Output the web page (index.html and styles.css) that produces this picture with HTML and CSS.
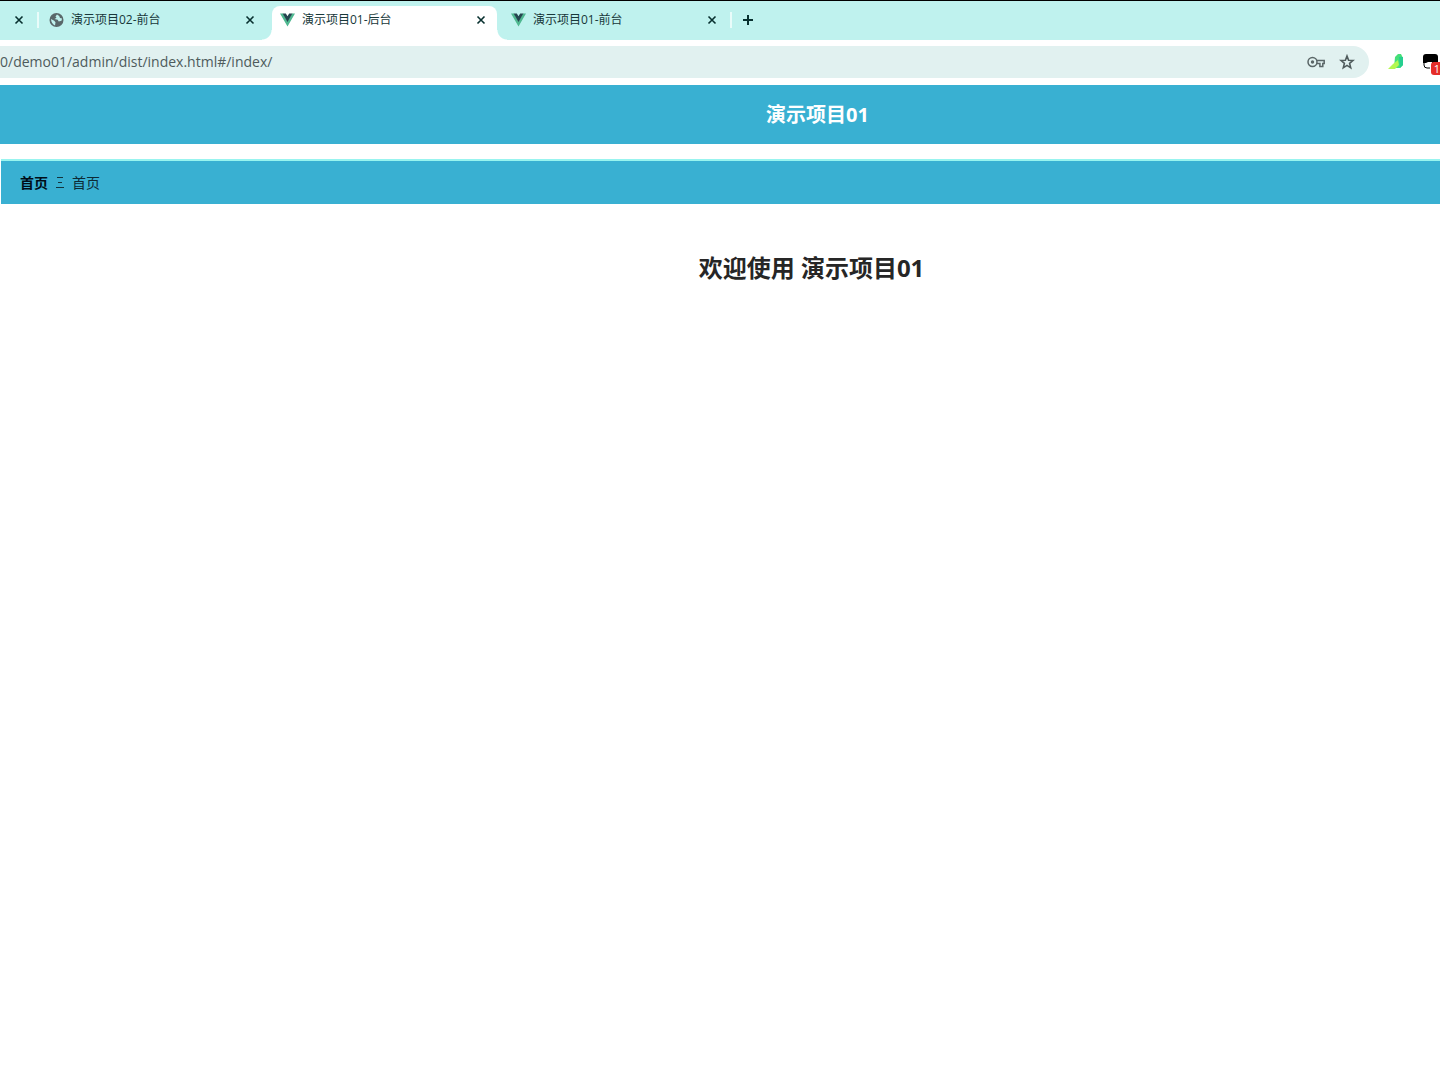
FILE: index.html
```html
<!DOCTYPE html>
<html lang="zh-CN">
<head>
<meta charset="utf-8">
<meta name="viewport" content="width=device-width, initial-scale=1">
<title>演示项目01-后台</title>
<link rel="stylesheet" href="styles.css">
</head>
<body>
<svg class="defs" width="0" height="0" aria-hidden="true">
  <symbol id="close" viewBox="0 0 10 10"><path d="M1.500 1.500l7 7m0-7l-7 7" fill="none" stroke="#08302f" stroke-width="1.600"/></symbol>
  <symbol id="vue" viewBox="0 0 16 14"><path d="M0 0h3.200L8 8.300 12.800 0H16L8 14z" fill="#4fb890"/><path d="M2.800 0h3.400L8 3l1.800-3h3.400L8 9z" fill="#24454f"/></symbol>
</svg>
<header class="browser">
  <nav class="tabs" aria-label="标签页">
    <div class="tab tab-cut"><button class="icon-button" aria-label="关闭"><svg width="10" height="10"><use href="#close"/></svg></button></div>
    <div class="tab divided">
      <svg class="favicon" width="14" height="14" viewBox="0 0 14 14"><circle cx="7" cy="7" r="7" fill="#59686a"/><path d="M7.500 1.500L6 3.500l1 1.300L5 6l3.200.8 1 1.700 2.800-.7.500-2.300-2-.5-.8-2zM1.500 6l3.200 1.800 1.300 1.400-.5 3.200C3.300 11.600 1.600 9 1.500 6z" fill="#bff2ee"/></svg>
      <a class="tab-title" href="#front2">演示项目02-前台</a>
      <button class="icon-button" aria-label="关闭"><svg width="10" height="10"><use href="#close"/></svg></button>
    </div>
    <div class="tab active">
      <svg class="favicon" width="15" height="14"><use href="#vue"/></svg>
      <a class="tab-title" href="#admin1" aria-current="page">演示项目01-后台</a>
      <button class="icon-button" aria-label="关闭"><svg width="10" height="10"><use href="#close"/></svg></button>
    </div>
    <div class="tab">
      <svg class="favicon" width="15" height="14"><use href="#vue"/></svg>
      <a class="tab-title" href="#front1">演示项目01-前台</a>
      <button class="icon-button" aria-label="关闭"><svg width="10" height="10"><use href="#close"/></svg></button>
    </div>
    <div class="new-tab divided"><button class="icon-button" aria-label="新标签页"><svg width="10" height="10" viewBox="0 0 10 10"><path d="M5 0v10M0 5h10" stroke="#08302f" stroke-width="2"/></svg></button></div>
  </nav>
  <div class="toolbar">
    <div class="address">
      <input class="url" type="text" aria-label="地址" value="0/demo01/admin/dist/index.html#/index/">
      <button class="icon-button" aria-label="密码"><svg width="18" height="12" viewBox="0 0 18 12"><g fill="none" stroke="#5a6667" stroke-width="1.500"><circle cx="5.500" cy="6" r="4.500"/><path d="M9.600 4.500H17.200v3H15.800v3h-2.900v-3H9.600"/></g><circle cx="5.500" cy="6" r="1.700" fill="#5a6667"/></svg></button>
      <button class="icon-button" aria-label="收藏"><svg width="16" height="16" viewBox="0 0 16 16"><path d="M8 2l1.600 4.200 4.400.3-3.400 2.900 1.100 4.400L8 11.400l-3.700 2.400 1.100-4.400L2 6.500l4.400-.3z" fill="none" stroke="#4f5b5c" stroke-width="1.600"/></svg></button>
    </div>
    <button class="icon-button" aria-label="扩展"><svg width="16" height="18" viewBox="0 0 16 18"><path d="M7 4l3-3 3 0 2 4v7l-3 3H6z" fill="#45df78"/><path d="M11 4l4 0v8l-3 3z" fill="#25cf90"/><path d="M0 16l5-5 5-4 1 5-4 4z" fill="#b4f751"/></svg></button>
    <button class="icon-button extension" aria-label="扩展，1 条通知"><svg width="16" height="16" viewBox="0 0 16 16"><rect width="15" height="14" rx="3" fill="#000"/><path d="M0 9h3l2-1h4v7H0z" fill="#fff"/><path d="M1 9v2q0 3 3 3h3" fill="none" stroke="#000"/></svg><span class="badge">1</span></button>
  </div>
</header>
<div class="app-header"><h1 class="app-name">演示项目01</h1></div>
<main>
  <nav class="breadcrumb" aria-label="面包屑">
    <a class="crumb-root" href="#/index/">首页</a>
    <svg width="8" height="12" viewBox="0 0 8 12" aria-hidden="true"><path d="M1 1.500h6M2 6.500h4M0 11.500h8" stroke="#12343e" stroke-width="1"/></svg>
    <span>首页</span>
  </nav>
  <h2 class="welcome">欢迎使用 演示项目01</h2>
</main>
</body>
</html>
```
FILE: styles.css
```css
* { box-sizing: border-box; }
body {
  margin: 0;
  background: #fff;
  color: #262626;
  font-family: "Open Sans", "Noto Sans CJK SC", sans-serif;
  overflow-x: hidden;
}
.defs { position: absolute; }
svg { display: block; flex: none; }
a { color: inherit; text-decoration: none; }
.icon-button {
  display: flex;
  flex: none;
  padding: 0;
  border: 0;
  background: none;
}
.tabs {
  display: flex;
  height: 40px;
  padding-top: 5px;
  border-top: 1px solid #000;
  background: #bff2ee;
}
.tab {
  position: relative;
  display: flex;
  align-items: center;
  flex: 0 1 231px;
  padding: 0 17px 6px 8px;
}
.tab-cut {
  flex: 0 0 41px;
  padding: 0 0 6px 14px;
}
.favicon { width: 15px; }
.tab-title {
  flex: 1;
  padding-left: 7px;
  color: #18383a;
  font-size: 12px;
  line-height: 18px;
  white-space: nowrap;
}
.divided::before {
  content: "";
  position: absolute;
  top: 6px;
  left: -4px;
  width: 2px;
  height: 16px;
  background: #e9fcfa;
}
.active { isolation: isolate; }
.active::before {
  content: "";
  position: absolute;
  z-index: -1;
  inset: 0 6px 0 0;
  border-radius: 8px 8px 0 0;
  background: #fff;
}
.active::after {
  content: "";
  position: absolute;
  z-index: -1;
  inset: auto -4px 0 -10px;
  height: 10px;
  background:
    radial-gradient(circle at 0 0, transparent 9px, #fff 10px) left / 10px 10px no-repeat,
    radial-gradient(circle at 100% 0, transparent 9px, #fff 10px) right / 10px 10px no-repeat;
}
.new-tab {
  position: relative;
  display: flex;
  align-items: center;
  padding: 0 0 6px 9px;
}
.toolbar {
  display: flex;
  align-items: center;
  height: 45px;
  padding-bottom: 1px;
  gap: 19px;
}
.address {
  display: flex;
  align-items: center;
  flex: 1;
  height: 32px;
  gap: 14px;
  padding-right: 14px;
  border-radius: 0 16px 16px 0;
  background: #e1f1f0;
}
.url {
  flex: 1;
  min-width: 0;
  padding: 0;
  border: 0;
  background: none;
  color: #4e5b5c;
  font: 14px/20px "Open Sans", sans-serif;
}
.extension {
  position: relative;
  margin-right: 1px;
}
.badge {
  position: absolute;
  top: 8px;
  left: 8px;
  width: 12px;
  border-radius: 3px;
  background: #e52d2a;
  color: #fff;
  font: 11px/13px "Open Sans", sans-serif;
  text-align: center;
}
.app-header {
  padding: 15px 0 14px 195px;
  background: #39b0d2;
  color: #fff;
  text-align: center;
}
.app-name {
  margin: 0;
  font-size: 20px;
  line-height: 30px;
}
.breadcrumb {
  display: flex;
  align-items: center;
  gap: 8px;
  height: 45px;
  margin: 15px 0 0 1px;
  padding: 0 0 2px 19px;
  border-top: 2px solid #98f4ef;
  background: #39b0d2;
  color: #0d2a35;
  font-size: 14px;
}
.crumb-root {
  color: #000d18;
  font-weight: 700;
}
.welcome {
  margin: 46px 0 0;
  padding-left: 183px;
  font-size: 24px;
  line-height: 36px;
  text-align: center;
}
```
